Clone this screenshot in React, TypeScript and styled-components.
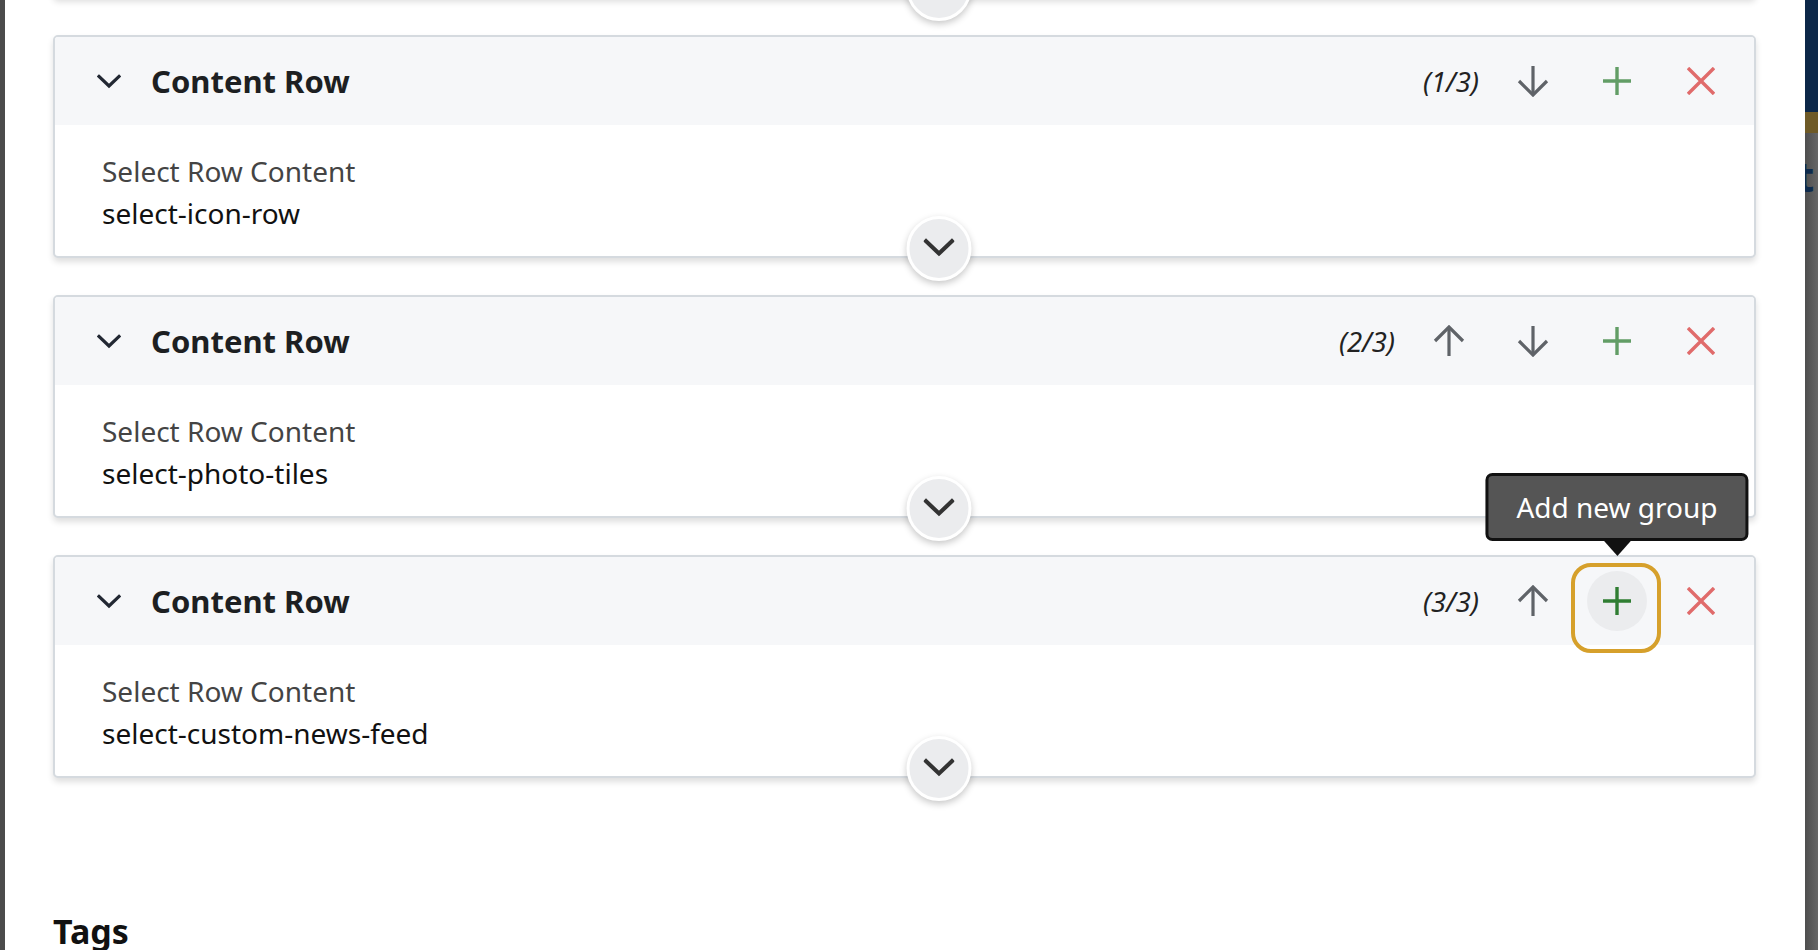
import React from "react";
import styled, { createGlobalStyle } from "styled-components";

const GlobalStyle = createGlobalStyle`
  html, body {
    margin: 0;
    padding: 0;
    background: #ffffff;
  }
  body {
    font-family: "Noto Sans", "Open Sans", "DejaVu Sans", sans-serif;
  }
  * {
    box-sizing: border-box;
  }
`;

type Row = {
  value: string;
};

const rows: Row[] = [
  { value: "select-icon-row" },
  { value: "select-photo-tiles" },
  { value: "select-custom-news-feed" },
];

// Icons

const Chevron = ({ size = 24 }: { size?: number }) => (
  <svg width={size} height={size * 0.625} viewBox="0 0 24 15" fill="none">
    <polyline
      points="2,2.5 12,12 22,2.5"
      stroke="currentColor"
      strokeWidth="3.2"
      strokeLinecap="square"
    />
  </svg>
);

const ArrowIcon = ({ dir }: { dir: "up" | "down" }) => (
  <svg
    width="32"
    height="32"
    viewBox="0 0 32 32"
    fill="none"
    style={{ transform: dir === "up" ? "rotate(180deg)" : undefined }}
  >
    <path d="M16 1V30" stroke="currentColor" strokeWidth="3.2" />
    <path d="M2 16L16 30L30 16" stroke="currentColor" strokeWidth="3.2" />
  </svg>
);

const PlusIcon = () => (
  <svg width="28" height="28" viewBox="0 0 28 28" fill="none">
    <path d="M14 0V28M0 14H28" stroke="currentColor" strokeWidth="3.4" />
  </svg>
);

const CloseIcon = () => (
  <svg width="28" height="28" viewBox="0 0 28 28" fill="none">
    <path d="M1 1L27 27M27 1L1 27" stroke="currentColor" strokeWidth="3.4" />
  </svg>
);

const RowCard = ({
  title,
  value,
  index,
  total,
  focusAdd,
}: {
  title: string;
  value: string;
  index: number;
  total: number;
  focusAdd?: boolean;
}) => {
  return (
    <Card>
      <Header>
        <Collapse>
          <Chevron />
        </Collapse>
        <Title>{title}</Title>
        <Actions>
          <Counter>
            ({index + 1}/{total})
          </Counter>
          {index > 0 && (
            <IconButton $tone="neutral" aria-label="Move up">
              <ArrowIcon dir="up" />
            </IconButton>
          )}
          {index < total - 1 && (
            <IconButton $tone="neutral" aria-label="Move down">
              <ArrowIcon dir="down" />
            </IconButton>
          )}
          <IconButton $tone="add" $focused={focusAdd} aria-label="Add new group">
            <PlusIcon />
            {focusAdd && <Tooltip>Add new group</Tooltip>}
          </IconButton>
          <IconButton $tone="remove" aria-label="Remove">
            <CloseIcon />
          </IconButton>
        </Actions>
      </Header>
      <Body>
        <Label>Select Row Content</Label>
        <Value>{value}</Value>
      </Body>
      <Toggle aria-label="Toggle">
        <Chevron size={31} />
      </Toggle>
    </Card>
  );
};

// the field above the rows, scrolled out of view except for its toggle
const PreviousField = () => (
  <Card>
    <Filler />
    <Toggle aria-label="Toggle">
      <Chevron size={31} />
    </Toggle>
  </Card>
);

const App = () => {
  return (
    <>
      <GlobalStyle />
      <Screen>
        <LeftEdge />
        <Modal>
          <List>
            <PreviousField />
            {rows.map((row, idx) => (
              <RowCard
                key={row.value}
                title="Content Row"
                value={row.value}
                index={idx}
                total={rows.length}
                focusAdd={idx === 2}
              />
            ))}
          </List>
          <SectionTitle>Tags</SectionTitle>
        </Modal>
        <RightEdge>
          <NavyBand />
          <GoldBand />
          <GreyBand>
            <BackLetter>t</BackLetter>
          </GreyBand>
        </RightEdge>
      </Screen>
    </>
  );
};

// Styled Components

const Screen = styled.div`
  display: flex;
  height: 100vh;
  overflow: hidden;
`;

const LeftEdge = styled.div`
  width: 5px;
  flex-shrink: 0;
  background: #4b4b4b;
`;

const RightEdge = styled.div`
  width: 13px;
  flex-shrink: 0;
  display: flex;
  flex-direction: column;
  overflow: hidden;
`;

const NavyBand = styled.div`
  height: 112px;
  background: #0c2748;
`;

const GoldBand = styled.div`
  height: 21px;
  background: #6e5a27;
`;

const GreyBand = styled.div`
  flex: 1;
  background: linear-gradient(90deg, #4e4e4e, #676767);
  padding-top: 22px;
`;

const BackLetter = styled.span`
  display: block;
  margin-left: -9px;
  font-size: 42px;
  font-weight: 700;
  line-height: 1;
  color: #0d2a4c;
`;

const Modal = styled.main`
  flex: 1;
  min-width: 0;
  background: #ffffff;
  padding: 0 49px 0 48px;
  display: flex;
  flex-direction: column;
`;

const List = styled.div`
  display: flex;
  flex-direction: column;
  gap: 37px;
  margin-top: -225px;
`;

const Card = styled.section`
  position: relative;
  border: 2px solid #d5dadf;
  border-radius: 5px;
  background: #ffffff;
  box-shadow: 0 4px 6px rgba(0, 0, 0, 0.13);
`;

const Filler = styled.div`
  height: 219px;
`;

const Header = styled.div`
  height: 88px;
  display: flex;
  align-items: center;
  padding: 0 23px 0 42px;
  background: #f6f7f9;
  border-radius: 3px 3px 0 0;
`;

const Collapse = styled.span`
  display: flex;
  color: #222833;
`;

const Title = styled.h3`
  flex: 1;
  margin: 0 0 0 30px;
  font-size: 31px;
  font-weight: 700;
  color: #1d1f22;
`;

const Actions = styled.div`
  display: flex;
  align-items: center;
  gap: 24px;
`;

const Counter = styled.span`
  font-size: 27.5px;
  font-style: italic;
  color: #222222;
`;

const toneColor = {
  neutral: "#5f6368",
  add: "#629d66",
  remove: "#e06b6b",
};

const IconButton = styled.button<{
  $tone: "neutral" | "add" | "remove";
  $focused?: boolean;
}>`
  position: relative;
  width: 60px;
  height: 60px;
  padding: 0;
  border: none;
  border-radius: 50%;
  display: grid;
  place-items: center;
  cursor: pointer;
  background: ${(p) => (p.$focused ? "#ebecee" : "transparent")};
  color: ${(p) => (p.$focused ? "#2f7d32" : toneColor[p.$tone])};

  &::after {
    content: "";
    display: ${(p) => (p.$focused ? "block" : "none")};
    position: absolute;
    top: -8px;
    left: -16px;
    right: -14px;
    bottom: -22px;
    border: 4px solid #d6a02b;
    border-radius: 20px;
  }
`;

const Tooltip = styled.span`
  position: absolute;
  bottom: calc(100% + 30px);
  left: 50%;
  transform: translateX(-50%);
  z-index: 2;
  height: 68px;
  padding: 0 28px;
  display: flex;
  align-items: center;
  white-space: nowrap;
  background: #555555;
  border: 3px solid #111111;
  border-radius: 7px;
  color: #ffffff;
  font-family: "Noto Sans", sans-serif;
  font-size: 28px;

  &::after {
    content: "";
    position: absolute;
    top: 100%;
    left: 50%;
    transform: translateX(-50%);
    border-left: 16px solid transparent;
    border-right: 16px solid transparent;
    border-top: 18px solid #111111;
  }
`;

const Body = styled.div`
  padding: 25px 47px 22px;
`;

const Label = styled.div`
  font-size: 28px;
  line-height: 42px;
  color: #444444;
`;

const Value = styled.div`
  font-size: 28px;
  line-height: 42px;
  color: #111111;
`;

const Toggle = styled.button`
  position: absolute;
  left: calc(50% + 34px);
  bottom: -24.5px;
  transform: translateX(-50%);
  z-index: 1;
  width: 65px;
  height: 65px;
  padding: 0;
  border: 3px solid #ffffff;
  border-radius: 50%;
  background: #ebecee;
  box-shadow: 0 3px 7px rgba(0, 0, 0, 0.22);
  display: grid;
  place-items: center;
  color: #333333;
  cursor: pointer;
`;

const SectionTitle = styled.h2`
  margin: 130px 0 0;
  font-size: 34px;
  font-weight: 700;
  color: #111111;
`;

export default App;
